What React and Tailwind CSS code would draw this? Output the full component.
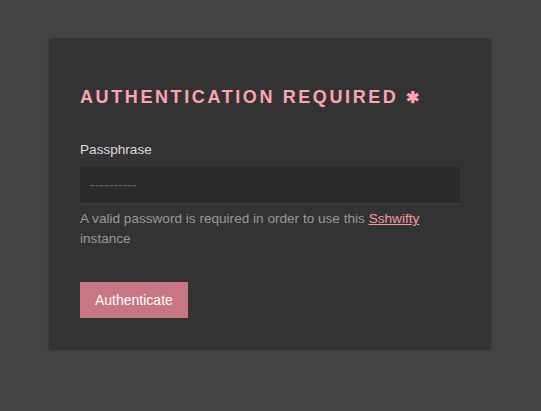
export default function App() {
  return (
    <div
      className="min-h-screen w-full bg-[#444] pt-[39px] pl-[49px]"
      style={{ fontFamily: '"Liberation Sans", Arial, sans-serif' }}
    >
      <div className="w-[442px] rounded-[3px] bg-[#333] px-[31px] pt-[47px] pb-[32px] shadow-[0_0_3px_rgba(0,0,0,0.3)]">
        <h1 className="text-[18px] leading-[22px] font-bold tracking-[2.6px] text-[#ffa3b1]">
          AUTHENTICATION REQUIRED <span className="text-[16px]">✱</span>
        </h1>
        <form className="mt-[31px]" onSubmit={(e) => e.preventDefault()}>
          <label className="block text-[13.6px] leading-[20px] text-[#ddd]">Passphrase</label>
          <input
            type="password"
            placeholder="----------"
            className="mt-[7px] block h-[38px] w-full border-b-2 border-[#3a3a3a] bg-[#2b2b2b] px-[10px] text-[14px] text-[#ddd] outline-none placeholder:text-[#666]"
          />
          <p className="mt-[4px] text-[13.6px] leading-[20px] text-[#999]">
            A valid password is required in order to use this{" "}
            <a href="#" className="text-[#f99] underline">
              Sshwifty
            </a>{" "}
            instance
          </p>
          <button
            type="submit"
            className="mt-[33px] h-[36px] bg-[#c97684] px-[15px] text-[14px] text-white"
          >
            Authenticate
          </button>
        </form>
      </div>
    </div>
  );
}
